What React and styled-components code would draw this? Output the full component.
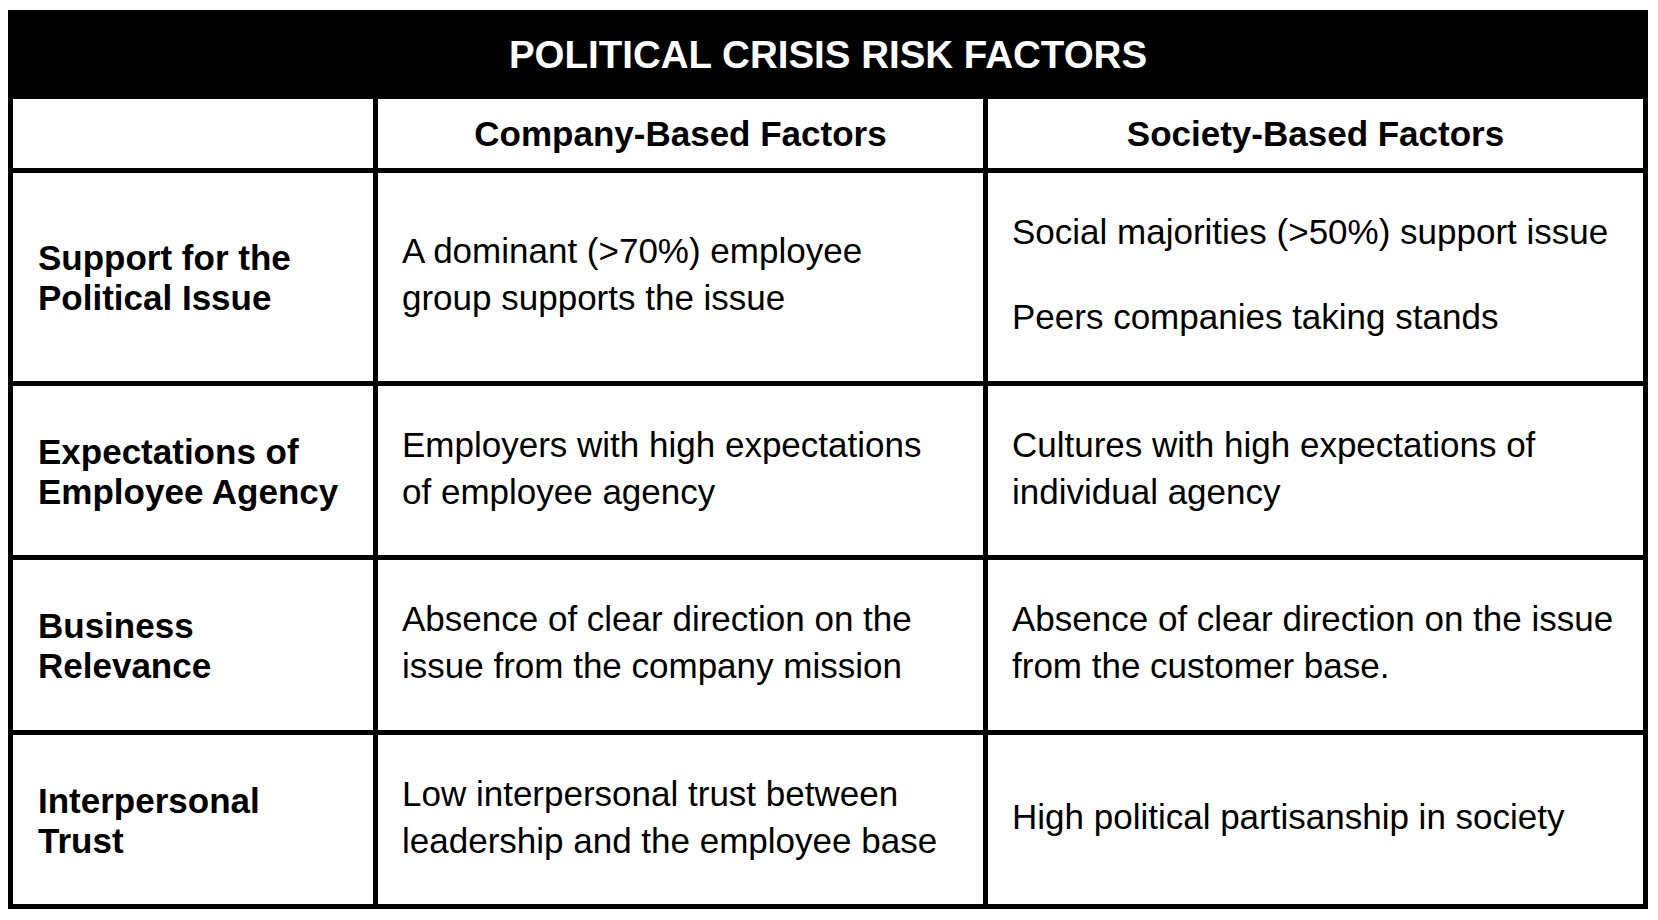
import React from 'react';
import styled, { createGlobalStyle } from 'styled-components';

const GlobalStyle = createGlobalStyle`
  html, body {
    margin: 0;
    padding: 0;
    background: #fff;
  }
  body {
    font-family: "Liberation Sans", Arial, Helvetica, sans-serif;
    color: #000;
  }
`;

const Page = styled.div`
  padding: 10px 0 0 8px;
`;

const Table = styled.div`
  width: 1640px;
  background: #000;
`;

const TitleBar = styled.div`
  height: 89px;
  display: flex;
  align-items: center;
  justify-content: center;
  color: #fff;
  font-size: 38.5px;
  font-weight: bold;
`;

const Grid = styled.div`
  display: grid;
  grid-template-columns: 360px 605px 655px;
  grid-template-rows: 69px 208px 169px 170px 169px;
  gap: 5px;
  padding: 0 5px 5px;
`;

const Cell = styled.div`
  background: #fff;
  display: flex;
  flex-direction: column;
  justify-content: center;
  font-size: 35px;
  white-space: nowrap;
`;

const HeaderCell = styled(Cell)`
  align-items: center;
  font-weight: bold;
`;

const LabelCell = styled(Cell)`
  padding: 2px 0 0 25px;
  font-weight: bold;
  line-height: 40px;
`;

const BodyCell = styled(Cell)`
  padding: 0 0 6px 24px;
  line-height: 47px;
  gap: 38px;
`;

const Para = styled.div``;

const rows = [
  {
    label: ['Support for the', 'Political Issue'],
    company: [['A dominant (>70%) employee', 'group supports the issue']],
    society: [['Social majorities (>50%) support issue'], ['Peers companies taking stands']],
  },
  {
    label: ['Expectations of', 'Employee Agency'],
    company: [['Employers with high expectations', 'of employee agency']],
    society: [['Cultures with high expectations of', 'individual agency']],
  },
  {
    label: ['Business', 'Relevance'],
    company: [['Absence of clear direction on the', 'issue from the company mission']],
    society: [['Absence of clear direction on the issue', 'from the customer base.']],
  },
  {
    label: ['Interpersonal', 'Trust'],
    company: [['Low interpersonal trust between', 'leadership and the employee base']],
    society: [['High political partisanship in society']],
  },
];

const Lines = ({ lines }) =>
  lines.map((line, i) => (
    <React.Fragment key={i}>
      {i > 0 && <br />}
      {line}
    </React.Fragment>
  ));

const Body = ({ paras }) => (
  <BodyCell>
    {paras.map((p, i) => (
      <Para key={i}>
        <Lines lines={p} />
      </Para>
    ))}
  </BodyCell>
);

export default function App() {
  return (
    <Page>
      <GlobalStyle />
      <Table>
        <TitleBar>POLITICAL CRISIS RISK FACTORS</TitleBar>
        <Grid>
          <HeaderCell />
          <HeaderCell>Company-Based Factors</HeaderCell>
          <HeaderCell>Society-Based Factors</HeaderCell>
          {rows.map((r, i) => (
            <React.Fragment key={i}>
              <LabelCell>
                <Lines lines={r.label} />
              </LabelCell>
              <Body paras={r.company} />
              <Body paras={r.society} />
            </React.Fragment>
          ))}
        </Grid>
      </Table>
    </Page>
  );
}
